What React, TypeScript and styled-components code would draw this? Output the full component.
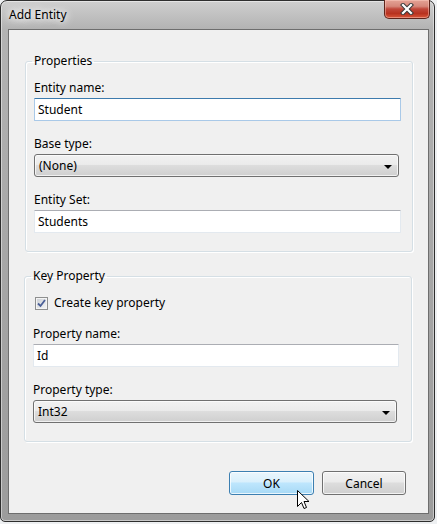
import React from "react";
import styled, { createGlobalStyle } from "styled-components";

const GlobalStyle = createGlobalStyle`
  html, body {
    margin: 0;
    padding: 0;
    background: #eef0f2;
  }
  body {
    font-family: "Noto Sans", "Open Sans", sans-serif;
    font-size: 12px;
    color: #000;
  }
`;

const Window = styled.div`
  position: relative;
  box-sizing: border-box;
  width: 435px;
  height: 522px;
  display: flex;
  flex-direction: column;
  border: 1px solid #2e2e2e;
  border-radius: 7px 7px 5px 5px;
  padding: 0 5px 7px 7px;
  background: linear-gradient(to bottom, #cfcfcf 0, #b3b3b3 28px, #a4a4a4 60%, #9c9c9c 100%);
  box-shadow: inset 0 0 0 1px rgba(255, 255, 255, 0.45);
`;

const TitleBar = styled.div`
  height: 28px;
  display: flex;
  justify-content: space-between;
  align-items: flex-start;
`;

const Title = styled.span`
  margin: 6px 0 0 1px;
  line-height: 16px;
  text-shadow: 0 0 6px #fff, 0 0 10px #fff, 0 0 12px rgba(255, 255, 255, 0.9);
`;

const CloseButton = styled.div`
  box-sizing: border-box;
  width: 46px;
  height: 19px;
  margin: -1px -1px 0 0;
  display: flex;
  align-items: center;
  justify-content: center;
  border: 1px solid #5e241b;
  border-top: none;
  border-radius: 0 0 5px 5px;
  background: linear-gradient(to bottom, #e4a396 0, #d6877a 35%, #c0473a 50%, #b8321f 75%, #d9573a 100%);
  box-shadow: inset 0 0 0 1px rgba(255, 210, 200, 0.45);
`;

const Client = styled.div`
  flex: 1;
  display: flex;
  flex-direction: column;
  border: 1px solid #6e6e6e;
  background: #f0f0f0;
  padding: 23px 14px 18px 16px;
`;

const Group = styled.fieldset<{ shift?: number }>`
  margin: 0 ${(p) => 1 + (p.shift ?? 0)}px 0 ${(p) => -(p.shift ?? 0)}px;
  padding: 11px ${(p) => 11 + (p.shift ?? 0)}px 18px 8px;
  border: 1px solid #d5dfe5;
  border-radius: 3px;
  box-shadow: inset 1px 1px 0 #fff, 1px 1px 0 #fff;
  display: flex;
  flex-direction: column;
  gap: 15px;
  & + & {
    margin-top: 16px;
  }
`;

const Legend = styled.legend`
  padding: 0 2px;
  margin-left: -2px;
  line-height: 16px;
`;

const Field = styled.div`
  display: flex;
  flex-direction: column;
  gap: 2px;
`;

const Label = styled.label`
  line-height: 16px;
`;

const TextBox = styled.div<{ focused?: boolean }>`
  box-sizing: border-box;
  height: 23px;
  display: flex;
  align-items: center;
  padding-left: 3px;
  background: #fff;
  border: 1px solid ${(p) => (p.focused ? "#a9c9e8" : "#e3e9ef")};
  border-top-color: ${(p) => (p.focused ? "#3d7bad" : "#abadb3")};
  border-radius: 1px;
`;

const ComboBox = styled.div`
  box-sizing: border-box;
  height: 23px;
  margin-right: 2px;
  display: flex;
  align-items: center;
  justify-content: space-between;
  padding: 0 6px 0 4px;
  border: 1px solid #707070;
  border-radius: 3px;
  background: linear-gradient(to bottom, #f2f2f2 0, #ebebeb 45%, #dddddd 50%, #cfcfcf 100%);
  box-shadow: inset 0 0 0 1px rgba(255, 255, 255, 0.7);
`;

const Arrow = styled.span`
  width: 0;
  height: 0;
  margin-top: 2px;
  border-left: 4px solid transparent;
  border-right: 4px solid transparent;
  border-top: 4px solid #000;
`;

const CheckRow = styled.label`
  display: flex;
  align-items: center;
  gap: 6px;
  line-height: 16px;
  padding-left: 2px;
`;

const CheckBox = styled.span`
  box-sizing: border-box;
  width: 13px;
  height: 13px;
  display: flex;
  align-items: center;
  justify-content: center;
  border: 1px solid #8e8f8f;
  background: linear-gradient(135deg, #cbcfd5 0, #f6f6f6 100%);
  box-shadow: inset 0 0 0 1px #f4f4f4;
`;

const ButtonRow = styled.div`
  margin-top: auto;
  display: flex;
  justify-content: flex-end;
  gap: 8px;
  padding-right: 8px;
`;

const Button = styled.div<{ primary?: boolean }>`
  box-sizing: border-box;
  width: ${(p) => (p.primary ? "85px" : "84px")};
  height: 24px;
  display: flex;
  align-items: center;
  justify-content: center;
  border: 1px solid ${(p) => (p.primary ? "#3c7fb1" : "#707070")};
  border-radius: 3px;
  background: ${(p) =>
    p.primary
      ? "linear-gradient(to bottom, #eaf6fd 0, #d9f0fc 45%, #bee6fd 50%, #a7d9f5 100%)"
      : "linear-gradient(to bottom, #f2f2f2 0, #ebebeb 45%, #dddddd 50%, #cfcfcf 100%)"};
  box-shadow: inset 0 0 0 1px rgba(255, 255, 255, 0.75);
`;

const Cursor = styled.svg`
  position: absolute;
  left: 296px;
  top: 489px;
`;

export default function App() {
  return (
    <>
      <GlobalStyle />
      <Window>
        <TitleBar>
          <Title>Add Entity</Title>
          <CloseButton>
            <svg width="14" height="12" viewBox="0 0 14 12">
              <path d="M3 2 L11 10 M11 2 L3 10" stroke="#3b3b3b" strokeWidth="4.2" strokeLinecap="square" />
              <path d="M3 2 L11 10 M11 2 L3 10" stroke="#fff" strokeWidth="2.2" strokeLinecap="square" />
            </svg>
          </CloseButton>
        </TitleBar>
        <Client>
          <Group>
            <Legend>Properties</Legend>
            <Field>
              <Label>Entity name:</Label>
              <TextBox focused>Student</TextBox>
            </Field>
            <Field>
              <Label>Base type:</Label>
              <ComboBox>
                <span>(None)</span>
                <Arrow />
              </ComboBox>
            </Field>
            <Field>
              <Label>Entity Set:</Label>
              <TextBox>Students</TextBox>
            </Field>
          </Group>
          <Group shift={1}>
            <Legend>Key Property</Legend>
            <CheckRow>
              <CheckBox>
                <svg width="9" height="9" viewBox="0 0 9 9">
                  <path d="M1 4.5 L3.5 7 L8 1" fill="none" stroke="#4a5f97" strokeWidth="1.8" />
                </svg>
              </CheckBox>
              Create key property
            </CheckRow>
            <Field>
              <Label>Property name:</Label>
              <TextBox>Id</TextBox>
            </Field>
            <Field>
              <Label>Property type:</Label>
              <ComboBox>
                <span>Int32</span>
                <Arrow />
              </ComboBox>
            </Field>
          </Group>
          <ButtonRow>
            <Button primary>OK</Button>
            <Button>Cancel</Button>
          </ButtonRow>
        </Client>
        <Cursor width="13" height="21" viewBox="0 0 13 21">
          <path d="M0.5 0.5 L0.5 16.5 L4.5 12.5 L7 18.5 L9.5 17.5 L7 11.5 L12 11.5 Z" fill="#fff" stroke="#000" strokeWidth="1" />
        </Cursor>
      </Window>
    </>
  );
}
